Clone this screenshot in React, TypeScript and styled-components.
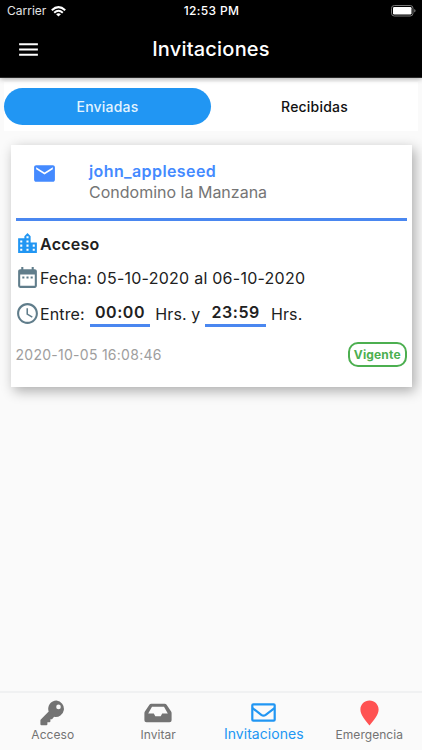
import React from 'react';
import styled, { createGlobalStyle } from 'styled-components';
import { MdEmail, MdLocationCity, MdDateRange, MdAccessTime, MdMenu } from 'react-icons/md';

const GlobalStyle = createGlobalStyle`
  * { box-sizing: border-box; }
  body { margin: 0; background: #fafafa; font-family: Inter, "Liberation Sans", sans-serif; }
  svg { display: block; flex: none; }
`;

const Screen = styled.div`
  width: 422px;
  height: 750px;
  display: flex;
  flex-direction: column;
  background: #fafafa;
  overflow: hidden;
`;

const Header = styled.header`
  height: 78px;
  flex: none;
  background: #000;
  color: #fff;
  border-bottom: 1px solid #292929;
  box-shadow: 0 1px 5px rgba(0, 0, 0, 0.32);
  z-index: 1;
`;

const StatusBar = styled.div`
  height: 22px;
  display: grid;
  grid-template-columns: 1fr auto 1fr;
  align-items: center;
  padding: 0 6px 0 7px;
`;

const Carrier = styled.div`
  display: flex;
  align-items: center;
  gap: 5px;
  font-size: 12px;
  line-height: 22px;
  color: #e4e4e4;
`;

const Clock = styled.div`
  font-size: 12px;
  font-weight: 500;
  line-height: 20px;
  padding-bottom: 1px;
  letter-spacing: 0.35px;
`;

const BatterySlot = styled.div`
  display: flex;
  justify-content: flex-end;
`;

const TitleBar = styled.div`
  height: 54px;
  display: grid;
  grid-template-columns: 57px 1fr 57px;
  align-items: center;
  text-align: center;
`;

const MenuButton = styled.button`
  border: 0;
  padding: 1px 0 0 16px;
  background: none;
  color: #fff;
`;

const Title = styled.h1`
  margin: 0;
  font-size: 20px;
  font-weight: 500;
  line-height: 24px;
  letter-spacing: 0.2px;
`;

const Tabs = styled.nav`
  flex: none;
  display: flex;
  height: 49px;
  margin: 4px 4px 0;
  padding: 6px 0;
  background: #fff;
`;

const Tab = styled.button<{ $active?: boolean }>`
  flex: 1;
  border: 0;
  border-radius: 19px;
  padding: 0;
  font: 500 14px/36px Inter, sans-serif;
  letter-spacing: 0.2px;
  background: ${p => (p.$active ? '#2196f3' : 'transparent')};
  color: ${p => (p.$active ? '#e3f4ff' : '#111')};
`;

const Card = styled.article`
  flex: none;
  margin: 14px 10.5px 0;
  height: 242px;
  padding: 0 5px;
  background: #fff;
  box-shadow: 3px 4px 12px rgba(0, 0, 0, 0.32);
`;

const CardHead = styled.div`
  height: 76px;
  display: flex;
  align-items: flex-start;
  gap: 32.5px;
  padding: 16px 0 0 16px;
  border-bottom: 3px solid #4a87f0;
  color: #448aff;
`;

const Sender = styled.div`
  font-size: 16px;
  font-weight: 600;
  line-height: 21px;
  letter-spacing: 0.4px;
`;

const Place = styled.div`
  font-size: 16px;
  line-height: 20px;
  color: #757575;
`;

const Row = styled.div<{ $height: number; $icon?: string }>`
  height: ${p => p.$height}px;
  display: flex;
  align-items: center;
  font-size: 16px;
  letter-spacing: 0.25px;
  color: #212121;
  white-space: pre;
  > svg { color: ${p => p.$icon}; margin-left: -0.5px; }
`;

const Strong = styled.span`
  padding-top: 1px;
  font-weight: 600;
`;

const Words = styled.span`
  padding-top: 1px;
  letter-spacing: 0.12px;
`;

const Time = styled.span`
  width: 60.5px;
  height: 26px;
  margin: 1px 5px 0;
  border-bottom: 3px solid #4a87f0;
  font-weight: 600;
  line-height: 22px;
  letter-spacing: 0.55px;
  text-align: center;
`;

const CardFoot = styled.div`
  display: flex;
  align-items: center;
  justify-content: space-between;
  height: 26px;
  margin-top: 5px;
`;

const Stamp = styled.time`
  font-size: 14px;
  letter-spacing: 0.27px;
  color: #9e9e9e;
`;

const Badge = styled.span`
  width: 58.5px;
  height: 25px;
  border: 2px solid #4caf50;
  border-radius: 10px;
  color: #4caf50;
  font-size: 12px;
  font-weight: 700;
  line-height: 21px;
  letter-spacing: 0.15px;
  text-align: center;
`;

const BottomBar = styled.nav`
  margin-top: auto;
  height: 59px;
  display: flex;
  border-top: 2px solid #f0f1f2;
`;

const NavItem = styled.a<{ $active?: boolean }>`
  flex: 1;
  display: flex;
  flex-direction: column;
  align-items: center;
  padding-top: ${p => (p.$active ? 6 : 7)}px;
  color: ${p => (p.$active ? '#2196f3' : '#737373')};
  font-size: ${p => (p.$active ? 14 : 12)}px;
  line-height: 17px;
  letter-spacing: 0.04px;
`;

const NavIcon = styled.span`
  height: 26px;
  display: flex;
  align-items: center;
`;

const Wifi = () => (
  <svg width="15" height="11" viewBox="0 0 15 11" fill="none" stroke="#fff" strokeWidth="2">
    <path d="M.8 4.2Q7.5-2 14.2 4.2M3.2 6.7q4.3-3.9 8.6 0" />
    <path d="M7.5 10.6 5.1 8.3q2.4-2 4.8 0Z" fill="#fff" stroke="none" />
  </svg>
);

const Battery = () => (
  <svg width="25" height="12" viewBox="0 0 25 12">
    <rect x=".5" y=".5" width="21.5" height="10.5" rx="2.8" fill="none" stroke="#777" />
    <rect x="2" y="2" width="18.5" height="7.5" rx="1.2" fill="#fff" />
    <path d="M23.2 4q1.4.5 1.4 1.8t-1.4 1.8Z" fill="#777" />
  </svg>
);

const Key = () => (
  <svg width="25" height="26" viewBox="0 0 25 26">
    <path
      fill="currentColor"
      fillRule="evenodd"
      d="M16.5.6a8.2 8.2 0 0 0-7.8 11L.8 19.4q-.4.4-.4 1v3.8q0 1 1 1h5q1 0 1-1v-2h2q1 0 1-1v-2h1.6l2.1-2.4A8.2 8.2 0 1 0 16.5.6Zm2 4a2.3 2.3 0 1 1 0 4.6 2.3 2.3 0 0 1 0-4.6Z"
    />
  </svg>
);

const Inbox = () => (
  <svg width="28" height="20" viewBox="0 0 28 20">
    <path
      fill="currentColor"
      fillRule="evenodd"
      d="M7.3.8h13.4q1.2 0 1.9 1l4.5 6.8q.5.8.5 1.7v6.9q0 2.1-2.1 2.1h-23Q.4 19.3.4 17.2v-6.9q0-.9.5-1.7L5.4 1.8q.7-1 1.9-1Zm.7 3L4.2 10.4h5.6l1.5 2.9h5.4l1.5-2.9h5.6L20 3.8Z"
    />
  </svg>
);

const Envelope = () => (
  <svg width="25" height="19" viewBox="0 0 25 19" fill="none" stroke="currentColor" strokeWidth="2.2">
    <rect x="1.3" y="1.3" width="22.4" height="16.4" rx="1" />
    <path d="m1.5 5.1 8.8 6.7q2.2 1.6 4.4 0l8.8-6.7" />
  </svg>
);

const Pin = () => (
  <svg width="19" height="26" viewBox="0 0 19 26">
    <path d="M9.5.5C4.4.5.4 4.4.4 9.4c0 5.5 4.8 10.6 9.1 16 4.3-5.4 9.1-10.5 9.1-16 0-5-4-8.9-9.1-8.9Z" fill="#ff5252" />
  </svg>
);

export default function App() {
  return (
    <>
      <GlobalStyle />
      <Screen>
        <Header>
          <StatusBar>
            <Carrier>Carrier <Wifi /></Carrier>
            <Clock>12:53 PM</Clock>
            <BatterySlot><Battery /></BatterySlot>
          </StatusBar>
          <TitleBar>
            <MenuButton aria-label="Menú"><MdMenu size={25} /></MenuButton>
            <Title>Invitaciones</Title>
          </TitleBar>
        </Header>
        <Tabs>
          <Tab $active>Enviadas</Tab>
          <Tab>Recibidas</Tab>
        </Tabs>
        <Card>
          <CardHead>
            <MdEmail size={25} />
            <div>
              <Sender>john_appleseed</Sender>
              <Place>Condomino la Manzana</Place>
            </div>
          </CardHead>
          <Row $height={44} $icon="#2196f3">
            <MdLocationCity size={25} /><Strong>Acceso</Strong>
          </Row>
          <Row $height={25} $icon="#607d8b">
            <MdDateRange size={25} />Fecha: 05-10-2020 al 06-10-2020
          </Row>
          <Row $height={46} $icon="#607d8b">
            <MdAccessTime size={25} />
            <Words>Entre:</Words><Time>00:00</Time>
            <Words>Hrs. y</Words><Time>23:59</Time>
            <Words>Hrs.</Words>
          </Row>
          <CardFoot>
            <Stamp>2020-10-05 16:08:46</Stamp>
            <Badge>Vigente</Badge>
          </CardFoot>
        </Card>
        <BottomBar>
          <NavItem><NavIcon><Key /></NavIcon>Acceso</NavItem>
          <NavItem><NavIcon><Inbox /></NavIcon>Invitar</NavItem>
          <NavItem $active><NavIcon><Envelope /></NavIcon>Invitaciones</NavItem>
          <NavItem><NavIcon><Pin /></NavIcon>Emergencia</NavItem>
        </BottomBar>
      </Screen>
    </>
  );
}
